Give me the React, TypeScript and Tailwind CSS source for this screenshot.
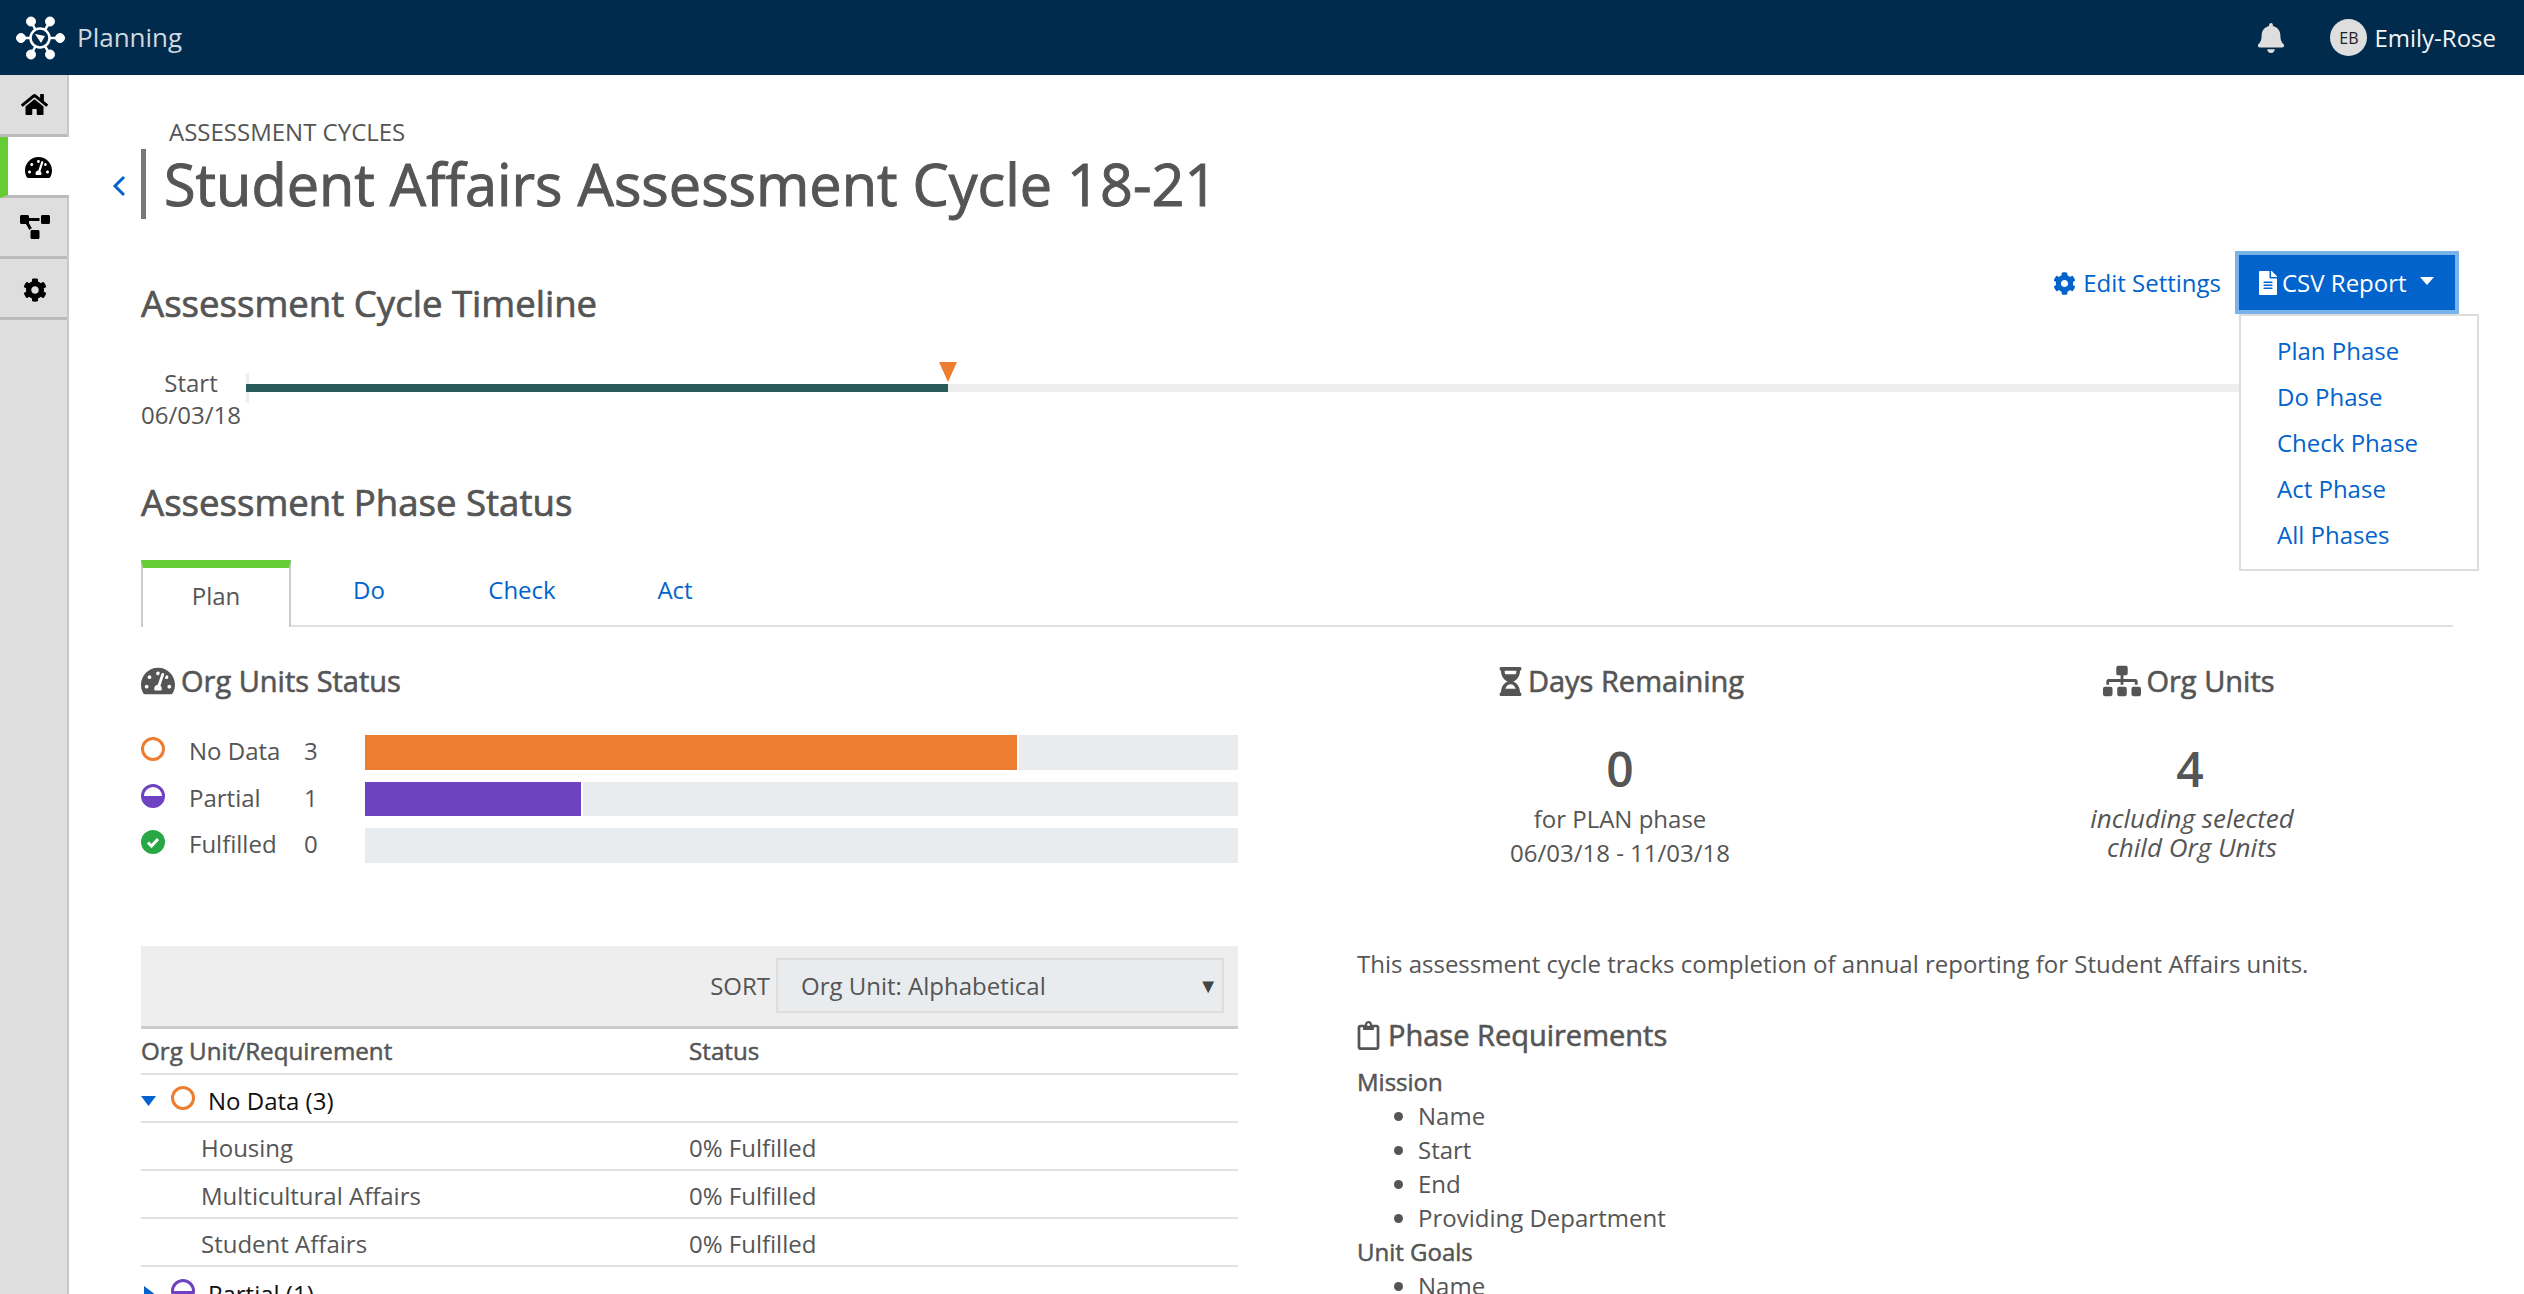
import { FaBell, FaCog, FaFileAlt, FaHome, FaHourglassHalf, FaProjectDiagram, FaRegClipboard, FaSitemap, FaTachometerAlt } from 'react-icons/fa'

const phases = ['Plan Phase', 'Do Phase', 'Check Phase', 'Act Phase', 'All Phases']
const units = ['Housing', 'Multicultural Affairs', 'Student Affairs']
const requirements = ['Name', 'Start', 'End', 'Providing Department']

function Logo() {
  return (
    <svg width="50" height="50" viewBox="0 0 50 50" aria-hidden="true">
      <g fill="#fff" stroke="#fff">
        <path d="M25 25 L6 25 M25 25 L16 8.5 M25 25 L35 8.5 M25 25 L45 25 M25 25 L16 41.5 M25 25 L35 41.5" strokeWidth="2.5" />
        <circle cx="6" cy="25" r="4.5" />
        <circle cx="45" cy="25" r="4.5" />
        <circle cx="16" cy="8.5" r="4.5" />
        <circle cx="35" cy="8.5" r="4.5" />
        <circle cx="16" cy="41.5" r="4.5" />
        <circle cx="35" cy="41.5" r="4.5" />
      </g>
      <circle cx="25" cy="25" r="9.5" fill="#012b4d" stroke="#fff" strokeWidth="2.5" />
      <path d="M20 21 L30 23 L26 30 Z" fill="#fff" />
    </svg>
  )
}

function StatusIcon({ kind }: { kind: 'none' | 'partial' | 'done' }) {
  return (
    <svg width="24" height="24" viewBox="0 0 24 24" className="shrink-0" aria-hidden="true">
      {kind === 'none' && <circle cx="12" cy="12" r="10.5" fill="none" stroke="#ed7d31" strokeWidth="3" />}
      {kind === 'partial' && (
        <>
          <path d="M2 12 A10 10 0 0 0 22 12 Z" fill="#6f42c1" />
          <circle cx="12" cy="12" r="10.5" fill="none" stroke="#6f42c1" strokeWidth="3" />
        </>
      )}
      {kind === 'done' && (
        <>
          <circle cx="12" cy="12" r="12" fill="#28a745" />
          <path d="M7 12.5 L10.5 16 L17 9" fill="none" stroke="#fff" strokeWidth="3" />
        </>
      )}
    </svg>
  )
}

function Caret({ down }: { down: boolean }) {
  return (
    <svg width="15" height="15" viewBox="0 0 15 15" className="-mt-[1px] shrink-0" aria-hidden="true">
      <path d={down ? 'M0 3 H15 L7.5 13 Z' : 'M3 0 V15 L13 7.5 Z'} fill="#0263cc" />
    </svg>
  )
}

function StatusRow({ kind, label, count, fill }: { kind: 'none' | 'partial' | 'done'; label: string; count: number; fill: number }) {
  return (
    <div className="flex h-[34.5px] items-center">
      <div className="-mt-[6px]"><StatusIcon kind={kind} /></div>
      <span className="mb-[2px] ml-[24px] w-[115px]">{label}</span>
      <span className="mb-[2px] w-[61px]">{count}</span>
      <div className="flex h-full flex-1 bg-[#e9ecef]">
        {fill > 0 && (
          <div
            className={kind === 'none' ? 'border-r-2 border-white bg-[#ed7d31]' : 'border-r-2 border-white bg-[#6f42c1]'}
            style={{ width: fill }}
          />
        )}
      </div>
    </div>
  )
}

export default function App() {
  return (
    <div className="flex h-[1294px] flex-col overflow-hidden bg-white font-['Open_Sans',sans-serif] text-[24px] text-[#555]">
      <header className="flex h-[75px] shrink-0 items-center bg-[#012b4d] pl-[15px] pr-[28px]">
        <Logo />
        <span className="ml-[12px] text-[26px] text-[#cfd8df]">Planning</span>
        <FaBell className="ml-auto text-[#dedede]" size={30} />
        <span className="ml-[44px] flex size-[37px] items-center justify-center rounded-full bg-[#dedede] text-[16px] text-[#222]">EB</span>
        <span className="ml-[7px] text-[#f2f4f6]">Emily-Rose</span>
      </header>

      <div className="flex min-h-0 flex-1">
        <nav className="w-[69px] shrink-0 border-r-2 border-[#c8c8c8] bg-[#dedede] text-black">
          <div className="flex h-[62px] items-center justify-center border-b-[3px] border-[#bbb] pl-[2px]"><FaHome size={27} /></div>
          <div className="-mr-[2px] flex h-[61px] items-center justify-center border-b-[3px] border-l-[8px] border-[#bbb] border-l-[#66cc33] bg-white pt-[2px]"><FaTachometerAlt size={27} /></div>
          <div className="flex h-[61px] items-center justify-center border-b-[3px] border-[#bbb] pl-[2px]"><FaProjectDiagram size={30} /></div>
          <div className="flex h-[61px] items-center justify-center border-b-[3px] border-[#bbb] pl-[2px] pt-[3px]"><FaCog size={24} /></div>
        </nav>

        <main className="min-w-0 flex-1 pl-[72px] pr-[71px]">
          <p className="ml-[28px] mt-[42px] leading-[30px]">ASSESSMENT CYCLES</p>
          <div className="-ml-[29px] flex h-[74px] items-center">
            <svg width="14" height="22" viewBox="0 0 14 22" className="mt-[4px]" aria-hidden="true">
              <path d="M12 2 L3 11 L12 20" fill="none" stroke="#0263cc" strokeWidth="3" />
            </svg>
            <span className="ml-[15px] h-[70px] w-[5px] bg-[#777]" />
            <h1 className="ml-[18px] text-[57.6px] leading-[74px] [-webkit-text-stroke:1px_#555]">Student Affairs Assessment Cycle 18-21</h1>
          </div>

          <div className="mt-[30px] flex h-[74px] items-start">
            <h2 className="mt-[30px] text-[36.6px] leading-[44px] [-webkit-text-stroke:0.7px_#555]">Assessment Cycle Timeline</h2>
            <a className="ml-auto mt-[14px] flex items-center gap-[7px] text-[#0263cc]">
              <FaCog size={23} />
              Edit Settings
            </a>
            <div className="relative ml-[18px] -mr-[2px] mt-[4px]">
              <button className="flex h-[55px] w-[216px] items-center bg-[#0263cc] pl-[17px] text-white outline-4 outline-[#7ab3e8]">
                <FaFileAlt size={24} />
                <span className="ml-[2px]">CSV Report</span>
                <svg width="14" height="8" viewBox="0 0 14 8" className="ml-[13px] -mt-[4px]" aria-hidden="true">
                  <path d="M0 0 H14 L7 8 Z" fill="#fff" />
                </svg>
              </button>
              <ul className="absolute left-0 top-[59px] z-10 h-[257px] w-[240px] border-2 border-[#ddd] bg-white py-[12px] pl-[36px] text-[#0263cc]">
                {phases.map(p => (
                  <li className="h-[46px] leading-[46px]" key={p}>{p}</li>
                ))}
              </ul>
            </div>
          </div>

          <div className="mt-[42px] flex items-start">
            <div className="w-[100px] text-center leading-[32px]">
              <div>Start</div>
              <div>06/03/18</div>
            </div>
            <div className="relative ml-[5px] mt-[17px] h-[8px] flex-1 bg-[#eee]">
              <span className="absolute left-0 top-[-11px] h-[30px] w-[3px] bg-[#eee]" />
              <div className="relative h-full bg-[#2a5b5b]" style={{ width: 702 }} />
              <svg width="20" height="20" viewBox="0 0 20 20" className="absolute left-[692px] top-[-22px]" aria-hidden="true">
                <path d="M1 0 H19 L10 20 Z" fill="#ed7d31" />
              </svg>
            </div>
          </div>

          <h2 className="mt-[49px] text-[36.6px] leading-[44px] [-webkit-text-stroke:0.7px_#555]">Assessment Phase Status</h2>

          <div className="mt-[36px] flex h-[67px] border-b-2 border-[#dee2e6] text-[#0263cc]">
            <div className="-mb-[2px] flex h-[67px] w-[150px] items-center justify-center border-x-2 border-t-8 border-x-[#ccc] border-t-[#66cc33] bg-white pb-[3px] text-[#555]">Plan</div>
            <div className="ml-[3px] flex h-[60px] w-[150px] items-center justify-center">Do</div>
            <div className="ml-[3px] flex h-[60px] w-[150px] items-center justify-center">Check</div>
            <div className="ml-[3px] flex h-[60px] w-[150px] items-center justify-center">Act</div>
          </div>

          <div className="mt-[34px] flex gap-[119px]">
            <section className="w-[1097px] shrink-0">
              <h3 className="flex h-[40px] items-center gap-[6px] text-[29px] [-webkit-text-stroke:0.6px_#555]">
                <FaTachometerAlt size={34} />
                Org Units Status
              </h3>
              <div className="mt-[34px] flex flex-col gap-[12px]">
                <StatusRow kind="none" label="No Data" count={3} fill={654} />
                <StatusRow kind="partial" label="Partial" count={1} fill={218} />
                <StatusRow kind="done" label="Fulfilled" count={0} fill={0} />
              </div>

              <div className="mt-[83px] flex h-[83px] items-center justify-end border-b-[3px] border-[#ccc] bg-[#eee] pr-[14px]">
                <span className="mr-[6px]">SORT</span>
                <div className="flex h-[55px] w-[448px] items-center justify-between border-2 border-[#ddd] bg-[#e9ecef] pl-[23px] pr-[4px] pt-[1px]">
                  Org Unit: Alphabetical
                  <span className="text-[20px] text-[#444]">▼</span>
                </div>
              </div>

              <div className="flex h-[46px] items-center border-b-2 border-[#dee2e6] pt-[1px] text-[24.2px] [-webkit-text-stroke:0.5px_#555]">
                <span className="w-[548px]">Org Unit/Requirement</span>
                <span>Status</span>
              </div>
              <div className="flex h-[48px] items-center border-b-2 border-[#dee2e6] pt-[6px] text-[#111]">
                <Caret down />
                <span className="-mt-[6px] ml-[15px]"><StatusIcon kind="none" /></span>
                <span className="ml-[13px]">No Data (3)</span>
              </div>
              {units.map(u => (
                <div className="flex h-[48px] items-center border-b-2 border-[#dee2e6] pt-[5px]" key={u}>
                  <span className="ml-[60px] w-[488px]">{u}</span>
                  <span>0% Fulfilled</span>
                </div>
              ))}
              <div className="flex h-[48px] items-center pt-[6px] text-[#111]">
                <Caret down={false} />
                <span className="-mt-[6px] ml-[15px]"><StatusIcon kind="partial" /></span>
                <span className="ml-[13px]">Partial (1)</span>
              </div>
            </section>

            <section className="min-w-0 flex-1">
              <div className="flex">
                <div className="w-[526px] text-center">
                  <h3 className="flex h-[40px] items-center justify-center gap-[3px] text-[29px] [-webkit-text-stroke:0.6px_#555]">
                    <FaHourglassHalf size={29} />
                    Days Remaining
                  </h3>
                  <div className="mt-[35px] text-[48px] font-semibold leading-[66px]">0</div>
                  <div className="leading-[34px]">for PLAN phase</div>
                  <div className="leading-[34px]">06/03/18 - 11/03/18</div>
                </div>
                <div className="ml-[156px] w-[300px] text-center">
                  <h3 className="flex h-[40px] items-center justify-center gap-[5px] text-[29px] [-webkit-text-stroke:0.6px_#555]">
                    <FaSitemap size={38} />
                    Org Units
                  </h3>
                  <div className="ml-[2px] mt-[35px] text-[48px] font-semibold leading-[66px]">4</div>
                  <div className="ml-[6px] mt-[2px] text-[26px] italic leading-[29px]">including selected</div>
                  <div className="ml-[6px] text-[26px] italic leading-[29px]">child Org Units</div>
                </div>
              </div>

              <p className="mt-[76px] leading-[36px]">This assessment cycle tracks completion of annual reporting for Student Affairs units.</p>

              <h3 className="mt-[33px] flex h-[40px] items-center gap-[5px] text-[29px] [-webkit-text-stroke:0.6px_#555]">
                <FaRegClipboard className="-ml-[3px]" size={29} />
                Phase Requirements
              </h3>
              <div className="mt-[10px] leading-[34px] [-webkit-text-stroke:0.5px_#555]">Mission</div>
              <ul className="list-disc pl-[61px] leading-[34px]">
                {requirements.map(r => (
                  <li key={r}>{r}</li>
                ))}
              </ul>
              <div className="leading-[34px] [-webkit-text-stroke:0.5px_#555]">Unit Goals</div>
              <ul className="list-disc pl-[61px] leading-[34px]">
                <li>Name</li>
              </ul>
            </section>
          </div>
        </main>
      </div>
    </div>
  )
}
